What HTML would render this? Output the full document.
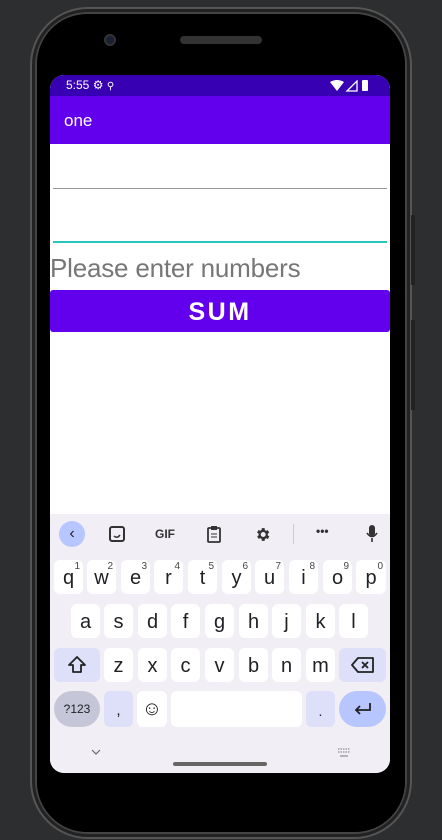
<!DOCTYPE html>
<html><head><style>
*{margin:0;padding:0;box-sizing:border-box}
body{width:442px;height:840px;background:#2d2e30;position:relative;overflow:hidden;font-family:"Liberation Sans",sans-serif}
.a{position:absolute}
.k{position:absolute;background:#fff;border-radius:6px;height:34px;width:29px;text-align:center;font-size:20px;line-height:36px;color:#202124}
.k sup{position:absolute;right:3px;top:2px;font-size:10px;line-height:10px;color:#444}
.g{background:#dde0f8}
</style></head><body>
<div class="a" style="left:30px;top:7px;width:382px;height:832px;border-radius:58px;background:#111;border:2px solid #555;box-shadow:inset 0 0 0 3px #222,inset 0 0 0 5px #444"></div>
<div class="a" style="left:37px;top:14px;width:368px;height:818px;border-radius:50px;background:#000"></div>
<div class="a" style="left:411px;top:215px;width:4px;height:70px;background:#222"></div>
<div class="a" style="left:411px;top:320px;width:4px;height:90px;background:#222"></div>
<div class="a" style="left:104px;top:34px;width:12px;height:12px;border-radius:50%;background:#1a2030;border:2px solid #333"></div>
<div class="a" style="left:180px;top:36px;width:82px;height:8px;border-radius:4px;background:#333"></div>
<div class="a" style="left:50px;top:75px;width:340px;height:698px;border-radius:14px;overflow:hidden;background:#fff">
 <div class="a" style="left:0;top:0;width:340px;height:21px;background:#3700b3;color:#fff;font-size:12px;line-height:21px;padding-left:16px">5:55 <span style="font-size:12px">⚙</span> <span style="font-size:10px">⚲</span>
  <svg class="a" style="left:280px;top:5px" width="44" height="12"><path d="M0 2 Q7 -2 14 2 L7 11Z" fill="#fff"/><path d="M17 11 L27 1 L27 11Z" fill="none" stroke="#fff" stroke-width="1.3"/><rect x="32" y="0" width="6" height="11" rx="1" fill="#fff"/></svg></div>
 <div class="a" style="left:0;top:21px;width:340px;height:48px;background:#6200ee;color:#fff;font-size:17px;line-height:50px;padding-left:14px">one</div>
 <div class="a" style="left:3px;top:113px;width:334px;height:1px;background:#999"></div>
 <div class="a" style="left:3px;top:166px;width:334px;height:2px;background:#26c6b8"></div>
 <div class="a" style="left:0;top:178px;font-size:26px;letter-spacing:-0.2px;color:#777">Please enter numbers</div>
 <div class="a" style="left:0;top:215px;width:340px;height:42px;background:#6200ee;border-radius:3px;color:#fff;font-size:25px;font-weight:bold;line-height:44px;text-align:center;letter-spacing:2.5px">SUM</div>
 <div class="a" style="left:0;top:439px;width:340px;height:259px;background:#f1eff5"></div>
</div>
<!-- keyboard toolbar -->
<div class="a" style="left:59px;top:521px;width:26px;height:26px;border-radius:50%;background:#b8c6ff;text-align:center;line-height:25px;font-size:16px;color:#222">‹</div>
<svg class="a" style="left:108px;top:525px" width="18" height="18"><rect x="2" y="2" width="14" height="14" rx="2" fill="none" stroke="#333" stroke-width="2"/><path d="M6 11 Q9 14 12 10" fill="none" stroke="#333" stroke-width="1.5"/></svg>
<div class="a" style="left:155px;top:527px;font-size:12px;font-weight:bold;color:#333">GIF</div>
<svg class="a" style="left:206px;top:525px" width="16" height="18"><rect x="2" y="3" width="12" height="14" rx="1" fill="none" stroke="#333" stroke-width="1.8"/><rect x="5" y="1" width="6" height="4" fill="#333"/><path d="M5 9h6M5 12h6" stroke="#333"/></svg>
<svg class="a" style="left:254px;top:526px" width="17" height="17" viewBox="0 0 24 24"><path fill="#333" d="M19.4 13a7.5 7.5 0 0 0 0-2l2.1-1.6-2-3.5-2.5 1a7 7 0 0 0-1.7-1L15 3h-4l-.4 2.7a7 7 0 0 0-1.7 1l-2.5-1-2 3.5L6.6 11a7.5 7.5 0 0 0 0 2l-2.1 1.6 2 3.5 2.5-1a7 7 0 0 0 1.7 1L11 21h4l.4-2.7a7 7 0 0 0 1.7-1l2.5 1 2-3.5zM13 15.5a3.5 3.5 0 1 1 0-7 3.5 3.5 0 0 1 0 7z"/></svg>
<div class="a" style="left:293px;top:524px;width:1px;height:20px;background:#ccc"></div>
<div class="a" style="left:316px;top:524px;font-size:12px;color:#333;font-weight:bold">•••</div>
<svg class="a" style="left:365px;top:524px" width="14" height="20"><rect x="4" y="1" width="6" height="11" rx="3" fill="#333"/><path d="M2 9 Q7 16 12 9M7 14v4" fill="none" stroke="#333" stroke-width="1.6"/></svg>
<!-- row1 -->
<div class="k" style="left:54px;top:560px">q<sup>1</sup></div>
<div class="k" style="left:87px;top:560px">w<sup>2</sup></div>
<div class="k" style="left:121px;top:560px">e<sup>3</sup></div>
<div class="k" style="left:154px;top:560px">r<sup>4</sup></div>
<div class="k" style="left:188px;top:560px">t<sup>5</sup></div>
<div class="k" style="left:222px;top:560px">y<sup>6</sup></div>
<div class="k" style="left:255px;top:560px">u<sup>7</sup></div>
<div class="k" style="left:289px;top:560px">i<sup>8</sup></div>
<div class="k" style="left:323px;top:560px">o<sup>9</sup></div>
<div class="k" style="left:356px;top:560px;width:30px">p<sup>0</sup></div>
<!-- row2 -->
<div class="k" style="left:71px;top:604px">a</div>
<div class="k" style="left:104px;top:604px">s</div>
<div class="k" style="left:138px;top:604px">d</div>
<div class="k" style="left:171px;top:604px">f</div>
<div class="k" style="left:205px;top:604px">g</div>
<div class="k" style="left:239px;top:604px">h</div>
<div class="k" style="left:272px;top:604px">j</div>
<div class="k" style="left:306px;top:604px">k</div>
<div class="k" style="left:339px;top:604px">l</div>
<!-- row3 -->
<div class="k g" style="left:54px;top:648px;width:46px"><svg width="20" height="20" style="margin-top:7px"><path d="M10 2 L18 10 H14 V17 H6 V10 H2Z" fill="none" stroke="#222" stroke-width="1.8" stroke-linejoin="round"/></svg></div>
<div class="k" style="left:104px;top:648px">z</div>
<div class="k" style="left:138px;top:648px">x</div>
<div class="k" style="left:171px;top:648px">c</div>
<div class="k" style="left:205px;top:648px">v</div>
<div class="k" style="left:239px;top:648px">b</div>
<div class="k" style="left:272px;top:648px">n</div>
<div class="k" style="left:306px;top:648px">m</div>
<div class="k g" style="left:339px;top:648px;width:47px"><svg width="24" height="18" style="margin-top:8px"><path d="M7 2 H22 V16 H7 L1 9Z" fill="none" stroke="#222" stroke-width="1.8" stroke-linejoin="round"/><path d="M11 6l6 6M17 6l-6 6" stroke="#222" stroke-width="1.8"/></svg></div>
<!-- row4 -->
<div class="k" style="left:54px;top:691px;width:46px;height:36px;border-radius:18px;background:#c5c6d8;font-size:12px;line-height:36px">?123</div>
<div class="k g" style="left:104px;top:691px;height:36px;line-height:40px;font-size:16px">,</div>
<div class="k" style="left:137px;top:691px;width:30px;height:36px;line-height:36px;font-size:20px">☺</div>
<div class="k" style="left:171px;top:691px;width:131px;height:36px"></div>
<div class="k g" style="left:306px;top:691px;height:36px;line-height:40px;font-size:14px">.</div>
<div class="k" style="left:339px;top:691px;width:47px;height:36px;border-radius:18px;background:#b8c6ff"><svg width="20" height="14" style="margin-top:11px"><path d="M17 1 V8 H3 M7 4 L3 8 L7 12" fill="none" stroke="#222" stroke-width="1.8"/></svg></div>
<svg class="a" style="left:90px;top:748px" width="12" height="8"><path d="M2 2 L6 6 L10 2" fill="none" stroke="#666" stroke-width="1.2"/></svg>
<svg class="a" style="left:337px;top:748px" width="14" height="9"><path d="M1 1h12M1 4h12" stroke="#777" stroke-dasharray="1.5 1"/><path d="M3 8h8" stroke="#777"/></svg>
<div class="a" style="left:173px;top:762px;width:94px;height:4px;border-radius:2px;background:#666"></div>
</body></html>
